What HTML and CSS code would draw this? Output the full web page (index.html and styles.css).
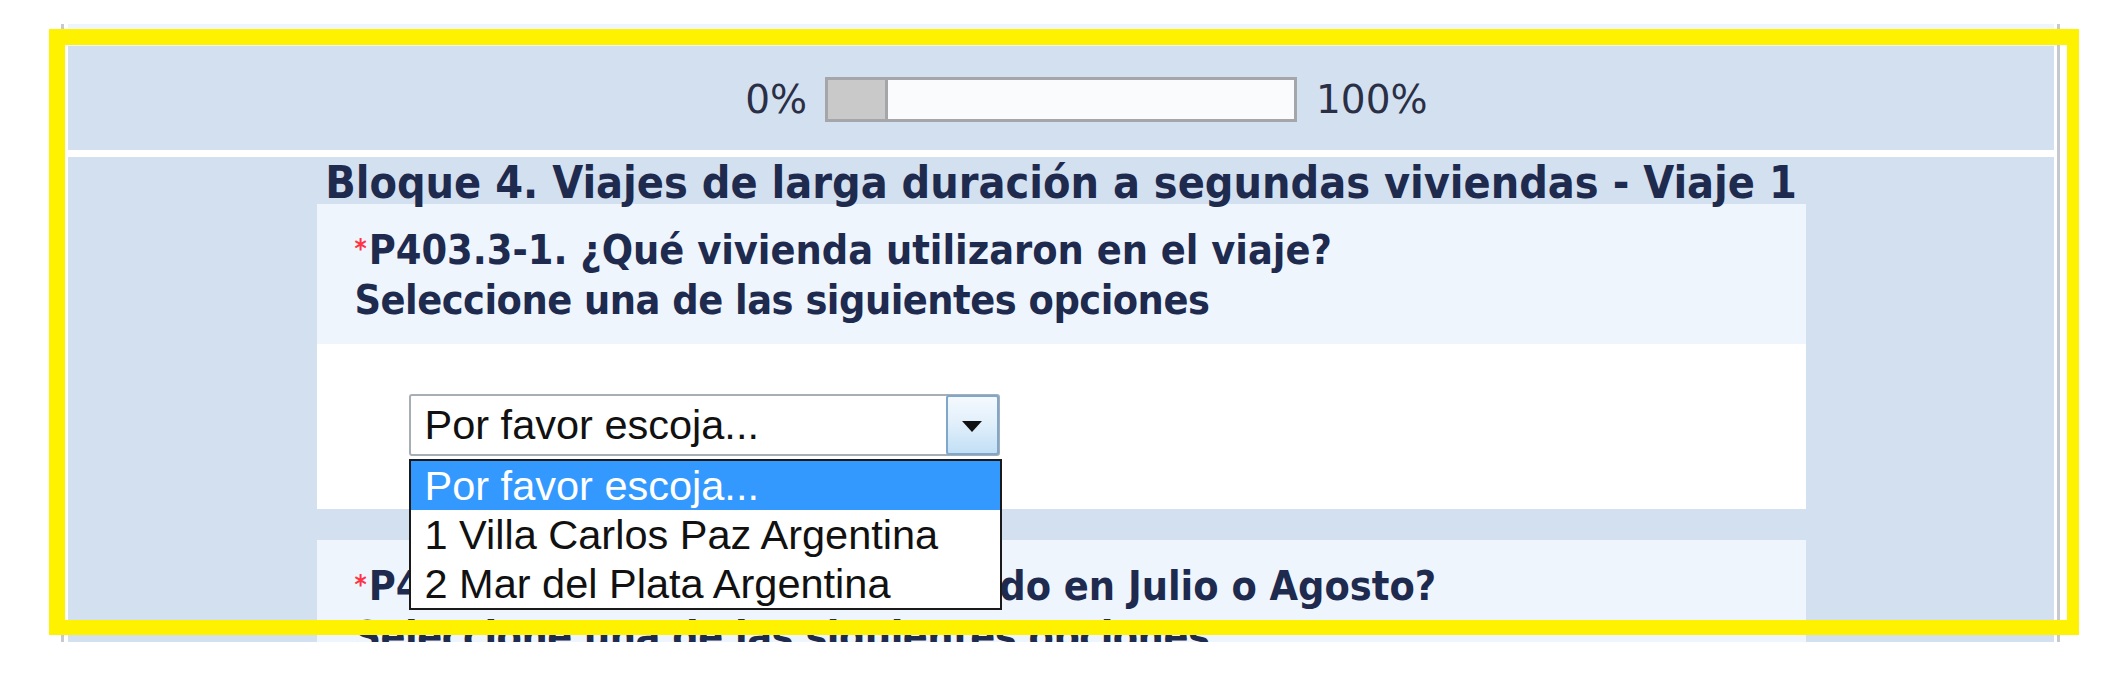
FILE: index.html
```html
<!DOCTYPE html>
<html lang="es">
<head>
<meta charset="utf-8">
<title>Encuesta</title>
<link rel="stylesheet" href="styles.css">
</head>
<body>
<div class="shot">
  <div class="page">
    <div class="strip"></div>
    <div class="progress">
      <span class="pct pct-left">0%</span>
      <div class="bar"><div class="bar-fill"></div></div>
      <span class="pct pct-right">100%</span>
    </div>
    <div class="section">
      <h2 class="block-title">Bloque 4. Viajes de larga duración a segundas viviendas - Viaje 1</h2>
      <div class="question">
        <div class="q-head">
          <div class="q-line"><span class="req">*</span>P403.3-1. ¿Qué vivienda utilizaron en el viaje?</div>
          <div class="q-line q-sub">Seleccione una de las siguientes opciones</div>
        </div>
        <div class="q-body">
          <div class="select">
            <span class="select-text">Por favor escoja...</span>
            <span class="select-btn"><span class="tri"></span></span>
            <ul class="dropdown">
              <li class="opt opt-active">Por favor escoja...</li>
              <li class="opt">1 Villa Carlos Paz Argentina</li>
              <li class="opt">2 Mar del Plata Argentina</li>
            </ul>
          </div>
        </div>
      </div>
      <div class="question q2">
        <div class="q-head">
          <div class="q-line"><span class="req">*</span>P403.4-1. ¿Su viaje fue realizado en Julio o Agosto?</div>
          <div class="q-line q-sub">Seleccione una de las siguientes opciones</div>
        </div>
      </div>
    </div>
  </div>
</div>
<div class="highlight"></div>
</body>
</html>
```

FILE: styles.css
```css
html, body {
  margin: 0;
  padding: 0;
  background: #ffffff;
}

.shot {
  margin: 24px 0 0 61px;
  width: 1999px;
  height: 618px;
  box-sizing: border-box;
  border-left: 3px solid #c6cad0;
  border-right: 3px solid #c6cad0;
  overflow: hidden;
}

.page {
  padding: 0 3px 0 4px;
  height: 100%;
  box-sizing: border-box;
}

.strip {
  height: 22px;
  background: #eef5fc;
}

.progress {
  height: 104px;
  background: #d3e0f0;
  display: grid;
  grid-template-columns: 1fr 472px 1fr;
  align-items: center;
  padding-top: 3px;
  box-sizing: border-box;
  font-family: "DejaVu Sans", Verdana, sans-serif;
  font-size: 39px;
  color: #2a2f45;
}

.pct-left {
  justify-self: end;
  margin-right: 18px;
}

.pct-right {
  justify-self: start;
  margin-left: 19px;
}

.bar {
  height: 45px;
  box-sizing: border-box;
  border: 3px solid #a4a6aa;
  background: #fafbfd;
}

.bar-fill {
  width: 57px;
  height: 100%;
  background: #c9c9c9;
  border-right: 3px solid #a4a6aa;
}

.section {
  margin-top: 7px;
  background: #d3e0f0;
  height: 600px;
}

.block-title {
  margin: 0;
  padding-top: 5px;
  height: 47px;
  box-sizing: border-box;
  line-height: 42px;
  text-align: center;
  font-family: "DejaVu Sans Condensed", "DejaVu Sans", sans-serif;
  font-stretch: condensed;
  font-weight: bold;
  font-size: 44.5px;
  color: #1e2a4e;
  white-space: nowrap;
}

.question {
  width: 1489px;
  margin: 0 auto;
  background: #ffffff;
}

.q2 {
  margin-top: 31px;
}

.q-head {
  background: #eef5fd;
  padding: 20px 0 19px 38px;
  font-family: "DejaVu Sans Condensed", "DejaVu Sans", sans-serif;
  font-stretch: condensed;
  font-weight: bold;
  font-size: 41px;
  line-height: 50px;
  color: #1e2a4e;
  white-space: nowrap;
}

.q-sub {
  letter-spacing: -0.5px;
}

.req {
  color: #ff3344;
  font-size: 26px;
  vertical-align: 6px;
  margin-right: 2px;
}

.q-body {
  height: 165px;
  box-sizing: border-box;
  padding: 50px 0 0 92px;
}

.select {
  position: relative;
  width: 591px;
  height: 62px;
  box-sizing: border-box;
  border: 2px solid #a9adb5;
  border-radius: 3px;
  background: #ffffff;
  display: flex;
  align-items: stretch;
  font-family: "Liberation Sans", Arial, sans-serif;
  font-size: 41.5px;
}

.select-text {
  flex: 1;
  padding-left: 14px;
  line-height: 58px;
  color: #111111;
}

.select-btn {
  width: 53px;
  box-sizing: border-box;
  border: 2px solid #7ea7c9;
  border-radius: 3px;
  margin: -1px -1px -1px 0;
  background: linear-gradient(#f4f9fe, #e2f0fb 45%, #c2dff5);
  display: flex;
  align-items: center;
  justify-content: center;
}

.tri {
  width: 0;
  height: 0;
  border-left: 10px solid transparent;
  border-right: 10px solid transparent;
  border-top: 11px solid #111111;
  margin-top: 2px;
}

.dropdown {
  position: absolute;
  left: -2px;
  top: 63px;
  width: 593px;
  margin: 0;
  padding: 0;
  list-style: none;
  box-sizing: border-box;
  border: 2px solid #1a1a1a;
  background: #ffffff;
  z-index: 2;
}

.opt {
  height: 49px;
  line-height: 49px;
  padding-left: 14px;
  color: #111111;
  white-space: nowrap;
}

.opt-active {
  background: #3399ff;
  color: #ffffff;
}

.highlight {
  position: absolute;
  left: 49px;
  top: 29px;
  width: 2030px;
  height: 606px;
  box-sizing: border-box;
  border-style: solid;
  border-color: #fff200;
  border-width: 16px 12px 15px 16px;
  pointer-events: none;
  z-index: 5;
}
```
